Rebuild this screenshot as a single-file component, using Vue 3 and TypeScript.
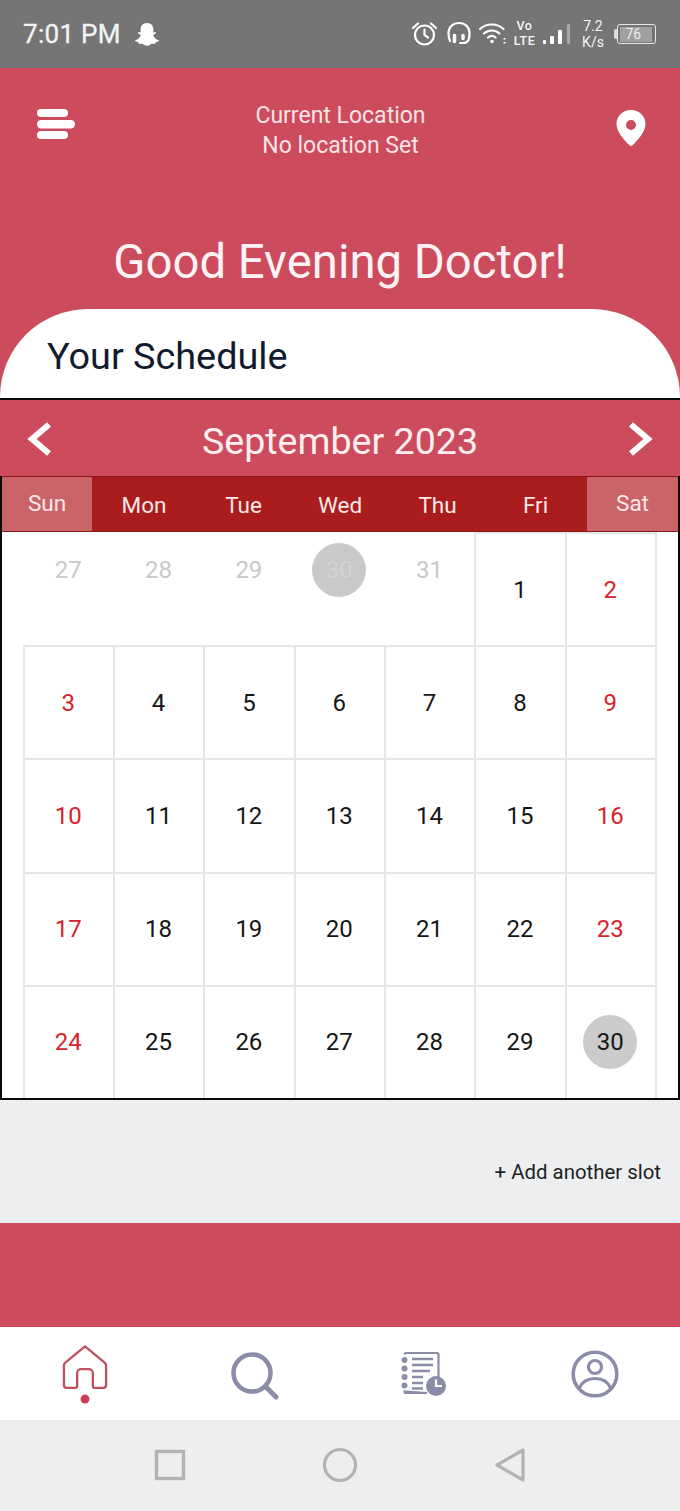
<script setup lang="ts">
interface Day { n: number; cls: string }
const weekdays: string[] = ['Sun', 'Mon', 'Tue', 'Wed', 'Thu', 'Fri', 'Sat']
const prev: number[] = [27, 28, 29, 30, 31]
const days: Day[] = []
prev.forEach((n, i) => days.push({ n, cls: i === 3 ? 'out today-out' : 'out' }))
for (let n = 1; n <= 30; n++) {
  const col = (n + 4) % 7
  const weekend = col === 0 || col === 6
  days.push({ n, cls: n === 30 ? 'selected' : weekend ? 'red' : '' })
}
</script>

<template>
  <div class="page">
    <div class="status">
      <div class="status-left">
        <span class="time">7:01 PM</span>
        <svg class="ghost" width="26" height="25" viewBox="0 0 26 25">
          <path fill="#fff" d="M13 1c4 0 6.400 2.800 6.400 6.400 0 1.200-.1 2.300-.1 3 .8.200 1.700-.5 2.300-.2.700.3.500 1.200-.2 1.600-.8.500-2 .7-2.100 1.400.4 2.200 2.800 4.300 5.200 5 .8.300.5 1-.2 1.300-.8.300-2 .4-2.500.7-.4.400-.2 1.300-.8 1.500-.8.200-2-.3-3.200.1-1.400.4-2.300 2-4.800 2s-3.400-1.600-4.800-2c-1.200-.4-2.400.1-3.200-.1-.6-.2-.4-1.100-.8-1.500-.5-.3-1.700-.4-2.500-.7-.7-.3-1-1-.2-1.300 2.400-.7 4.800-2.800 5.200-5-.1-.7-1.300-.9-2.100-1.400-.7-.4-.9-1.300-.2-1.600.6-.3 1.500.4 2.300.2 0-.7-.1-1.800-.1-3C6.600 3.800 9 1 13 1z" />
        </svg>
      </div>
      <div class="status-right">
        <svg width="27" height="26" viewBox="0 0 27 26" fill="none" stroke="#fff" stroke-width="2.200" class="s-icon alarm">
          <circle cx="13.500" cy="14" r="9.500" />
          <path d="M13.500 8.500V14l3.500 2.500M2 7l5-4.500M25 7l-5-4.500" stroke-linecap="round" />
        </svg>
        <svg width="24" height="26" viewBox="0 0 24 26" fill="none" stroke="#fff" stroke-width="2.200" class="s-icon headset">
          <path d="M3 20C1.500 17 1.500 14 1.500 12 1.500 6 6 2 12 2s10.500 4 10.500 10c0 3 0 5-1 7-1 2-3 3-5.500 3h-3" stroke-linecap="round" />
          <path d="M7.500 14.500v6M16 14.500v3" stroke-width="3.500" stroke-linecap="round" />
        </svg>
        <svg width="28" height="24" viewBox="0 0 28 24" fill="none" stroke="#fff" stroke-width="2.200" class="s-icon wifi">
          <path d="M1 7c6.500-6 17-6 23.500 0M5 11.500c4.500-4 11-4 15.500 0M9 15.500c2.300-2 5.200-2 7.500 0" stroke-linecap="round" />
          <circle cx="13" cy="19.500" r="1.800" fill="#fff" stroke="none" />
          <path d="M25.500 16v1.500M25.500 20v1.500" stroke-width="2" />
        </svg>
        <span class="volte"><span>Vo</span><span>LTE</span></span>
        <svg width="28" height="24" viewBox="0 0 28 24" fill="#fff" class="s-icon signal">
          <rect x="0" y="17" width="3" height="4" rx="1" />
          <rect x="7" y="13" width="4" height="8" rx="1" />
          <rect x="15" y="7" width="4" height="14" rx="1" />
          <rect x="24" y="1" width="3" height="20" rx="1" fill="#a8a8a8" />
        </svg>
        <span class="speed"><span>7.2</span><span>K/s</span></span>
        <div class="battery">
          <span class="battery-cap"></span>
          <span class="battery-body">
            <span class="battery-level">76</span>
          </span>
        </div>
      </div>
    </div>

    <div class="hero">
      <div class="top-row">
        <svg width="38" height="30" viewBox="0 0 38 30" fill="#fff" class="menu">
          <rect x="0" y="0" width="31" height="8" rx="4" />
          <rect x="0" y="11" width="38" height="8.500" rx="4.200" />
          <rect x="0" y="22" width="31" height="8" rx="4" />
        </svg>
        <div class="location">
          <div>Current Location</div>
          <div>No location Set</div>
        </div>
        <svg width="30" height="36" viewBox="0 0 30 36" class="pin">
          <path fill="#fff" fill-rule="evenodd" d="M15 0c8 0 14.500 6 14.500 14 0 7.500-7.500 16-13 21.300-.8.800-2.200.800-3 0C8 30 .5 21.500.5 14 .5 6 7 0 15 0zm0 10a5 5 0 1 0 0 10 5 5 0 0 0 0-10z" />
        </svg>
      </div>
      <h1 class="greeting">Good Evening Doctor!</h1>
      <div class="schedule"><span>Your Schedule</span></div>
    </div>

    <section class="calendar">
      <div class="month">
        <svg width="26" height="34" viewBox="0 0 26 34" fill="none" stroke="#fff" stroke-width="6">
          <path d="M23 2.500 6 17l17 14.500" />
        </svg>
        <span class="month-label">September 2023</span>
        <svg width="26" height="34" viewBox="0 0 26 34" fill="none" stroke="#fff" stroke-width="6">
          <path d="M3 2.500 20 17 3 31.500" />
        </svg>
      </div>
      <div class="weekdays">
        <div v-for="w in weekdays" :key="w" class="wd" :class="[w.toLowerCase(), { weekend: w === 'Sun' || w === 'Sat' }]">{{ w }}</div>
      </div>
      <div class="grid-clip">
        <div class="grid">
          <div v-for="(d, i) in days" :key="i" class="cell" :class="d.cls">
            <span class="num">{{ d.n }}</span>
          </div>
        </div>
      </div>
    </section>

    <div class="slot">
      <span>+ Add another slot</span>
    </div>

    <div class="band"></div>

    <nav class="tabs">
      <div class="tab">
        <svg width="46" height="62" viewBox="0 0 48 64.700" fill="none">
          <path d="M24 2.500 3.500 19.500c-1 .9-1.500 1.800-1.500 3.200v20c0 1.800 1.300 3 3 3h9c1.100 0 1.800-.7 1.800-1.800V30.500c0-2.500 2-4.300 4.200-4.300h8c2.200 0 4.200 1.800 4.200 4.300v13.400c0 1.100.7 1.800 1.800 1.800h9c1.700 0 3-1.200 3-3v-20c0-1.400-.5-2.300-1.500-3.200z" stroke="#bf4f5e" stroke-width="2.400" stroke-linejoin="round" />
          <circle cx="24" cy="57.500" r="4.700" fill="#cc3d52" />
        </svg>
      </div>
      <div class="tab">
        <svg width="48" height="48" viewBox="0 0 48 48" fill="none" stroke="#8a8ca8" stroke-width="4.500" stroke-linecap="round">
          <circle cx="21" cy="21" r="18.500" />
          <path d="M34.500 34.500 45 45" stroke-width="5" />
        </svg>
      </div>
      <div class="tab">
        <svg width="46" height="46" viewBox="0 0 46 46" fill="none" stroke="#8a8ca8">
          <path d="M3.500 3.500c0-1 .5-1.500 1.500-1.500h31c1 0 1.500.5 1.500 1.500V30M26 42H5c-1 0-1.500-.5-1.500-1.500z" stroke-width="2.200" />
          <path d="M11 8h21M11 14h21M11 20h18M11 26h11M11 32h11M11 37.500h11" stroke-width="2.400" />
          <g fill="#8a8ca8" stroke="none">
            <circle cx="3.500" cy="9" r="3" />
            <circle cx="3.500" cy="17.500" r="3" />
            <circle cx="3.500" cy="26" r="3" />
            <circle cx="3.500" cy="34.500" r="3" />
            <circle cx="35" cy="35" r="10" />
          </g>
          <path d="M35 28.500V35h6" stroke="#fff" stroke-width="2.200" />
        </svg>
      </div>
      <div class="tab">
        <svg width="48" height="48" viewBox="0 0 48 48" fill="none" stroke="#8a8ca8" stroke-width="3.600">
          <circle cx="24" cy="24" r="21.800" />
          <circle cx="24" cy="17" r="6.500" stroke-width="3.200" />
          <path d="M8.500 38c2.500-6 8-9.500 15.500-9.500S37 32 39.500 38" stroke-width="3.200" />
        </svg>
      </div>
    </nav>

    <div class="sysnav">
      <div class="sys">
        <svg width="32" height="32" viewBox="0 0 32 32" fill="none" stroke="#b3b3b3" stroke-width="3.400">
          <rect x="2.500" y="2.500" width="27" height="27" />
        </svg>
      </div>
      <div class="sys">
        <svg width="36" height="36" viewBox="0 0 36 36" fill="none" stroke="#b3b3b3" stroke-width="3.200">
          <circle cx="18" cy="18" r="15.500" />
        </svg>
      </div>
      <div class="sys">
        <svg width="32" height="34" viewBox="0 0 32 34" fill="none" stroke="#b3b3b3" stroke-width="3.200" stroke-linejoin="round">
          <path d="M29 2 3 17l26 15z" />
        </svg>
      </div>
    </div>
  </div>
</template>

<style>
html, body { margin: 0; padding: 0; background: #fff; }
</style>

<style scoped>
.page {
  width: 680px;
  height: 1511px;
  overflow: hidden;
  font-family: Roboto, "Liberation Sans", sans-serif;
  display: flex;
  flex-direction: column;
}
.status {
  height: 68px;
  flex: none;
  background: #757575;
  display: flex;
  align-items: center;
  justify-content: space-between;
  padding: 0 24px 0 23px;
  color: #f4f4f4;
  box-sizing: border-box;
}
.status-left { display: flex; align-items: center; gap: 13px; }
.time { font-size: 26px; letter-spacing: 0.3px; -webkit-text-stroke: 0.3px #f4f4f4; }
.ghost { margin-top: 1px; }
.status-right { display: flex; align-items: center; }
.s-icon { flex: none; }
.alarm { margin-right: 9px; }
.headset { margin-right: 8px; }
.wifi { margin-right: 5px; }
.volte {
  width: 25px;
  display: flex;
  flex-direction: column;
  align-items: center;
  font-size: 12.500px;
  line-height: 14.700px;
  letter-spacing: 0.6px;
  font-weight: 500;
  margin-right: 6px;
}
.signal { margin-right: 10px; margin-top: 2px; }
.speed {
  width: 24px;
  display: flex;
  flex-direction: column;
  align-items: center;
  font-size: 14px;
  line-height: 16.500px;
  margin-right: 9px;
}
.battery { display: flex; align-items: center; }
.battery-cap { width: 3px; height: 10px; background: #ddd; border-radius: 2px 0 0 2px; }
.battery-body {
  width: 39px;
  height: 20px;
  border: 1.500px solid #e6e6e6;
  border-radius: 3px;
  box-sizing: border-box;
  padding: 1.500px;
  display: flex;
}
.battery-level {
  width: 26px;
  background: #a0a0a0;
  font-size: 14px;
  line-height: 14px;
  text-align: left;
  padding-left: 6px;
  color: #eee;
  flex: none;
}
.hero {
  height: 330px;
  flex: none;
  background: #cc4b5c;
  color: #fff;
  display: flex;
  flex-direction: column;
}
.top-row {
  height: 132px;
  flex: none;
  display: grid;
  grid-template-columns: 1fr auto 1fr;
  align-items: flex-start;
  padding: 0 34px 0 37px;
  box-sizing: border-box;
}
.menu { margin-top: 41px; }
.pin { margin-top: 42px; justify-self: end; }
.location {
  text-align: center;
  font-size: 23px;
  line-height: 30px;
  padding-top: 33px;
  color: #fbe3e6;
  position: relative;
  left: -1px;
}
.greeting {
  margin: 0;
  height: 109px;
  padding-top: 36px;
  box-sizing: border-box;
  text-align: center;
  font-size: 47.300px;
  line-height: 52px;
  font-weight: 400;
  color: #fdf3f4;
}
.schedule {
  flex: 1;
  background: #fff;
  border-radius: 88px 88px 0 0;
  padding: 24px 0 0 47px;
  color: #121a2e;
  font-size: 37.800px;
  line-height: 46px;
}
.calendar {
  height: 702px;
  flex: none;
  box-sizing: border-box;
  border: 2px solid #0a0a0a;
  display: flex;
  flex-direction: column;
  background: #fff;
}
.month {
  height: 76px;
  flex: none;
  margin: 0 -2px;
  background: #cc4b5c;
  color: #fdeff0;
  display: flex;
  align-items: center;
  justify-content: space-between;
  padding: 2px 26px 0 26px;
  font-size: 37.600px;
  box-sizing: border-box;
}
.month-label { margin-top: 3px; }
.weekdays {
  height: 56px;
  flex: none;
  display: grid;
  grid-template-columns: 90px 104px 95px 98px 97px 101px 1fr;
  background: #ab1c1c;
  box-sizing: border-box;
  border-top: 1px solid #8c1515;
  border-bottom: 1px solid #8c1515;
  color: #fbe8e8;
  font-size: 22.500px;
}
.wd { display: flex; align-items: center; justify-content: center; padding-top: 1px; }
.wd.fri { padding-right: 2px; }
.wd.weekend { background: #cb6468; padding-top: 0; padding-bottom: 2px; }
.grid-clip {
  flex: 1;
  min-height: 0;
  overflow: hidden;
  padding: 1px 0 0 21.500px;
}
.grid {
  display: grid;
  width: 632.500px;
  grid-template-columns: repeat(7, 1fr);
  grid-auto-rows: 113.200px;
}
.cell {
  box-sizing: border-box;
  margin: -1px;
  padding-right: 1px;
  border: 2px solid #e6e6e6;
  display: flex;
  align-items: center;
  justify-content: center;
  font-size: 24px;
  color: #161616;
}
.cell.red { color: #d8232a; }
.cell.out {
  border-color: transparent;
  align-items: flex-start;
  color: #c9c9c9;
  padding-top: 9px;
}
.num {
  width: 54px;
  height: 54px;
  border-radius: 50%;
  display: flex;
  align-items: center;
  justify-content: center;
}
.today-out .num { background: #c9c9c9; color: #d4d4d4; }
.selected .num { background: #cbcbcb; }
.slot {
  height: 123px;
  flex: none;
  background: #eceef0;
  display: flex;
  align-items: flex-start;
  justify-content: flex-end;
  padding: 60px 19px 0 0;
  box-sizing: border-box;
  font-size: 20.400px;
  line-height: 25px;
  color: #1c1f24;
}
.band { height: 104px; flex: none; background: #cc4b5c; }
.tabs {
  height: 93px;
  flex: none;
  background: #fff;
  display: grid;
  grid-template-columns: repeat(4, 170px);
}
.tab { display: flex; justify-content: center; }
.tab:nth-child(1) { padding-top: 17px; }
.tab:nth-child(2) { padding-top: 25px; }
.tab:nth-child(3) { padding-top: 24px; padding-right: 2px; }
.tab:nth-child(4) { padding-top: 23px; }
.sysnav {
  flex: 1;
  background: #eeeeee;
  display: grid;
  grid-template-columns: repeat(3, 170px);
  padding-left: 85px;
  align-items: center;
  padding-bottom: 2px;
}
.sys { display: flex; justify-content: center; }
</style>
